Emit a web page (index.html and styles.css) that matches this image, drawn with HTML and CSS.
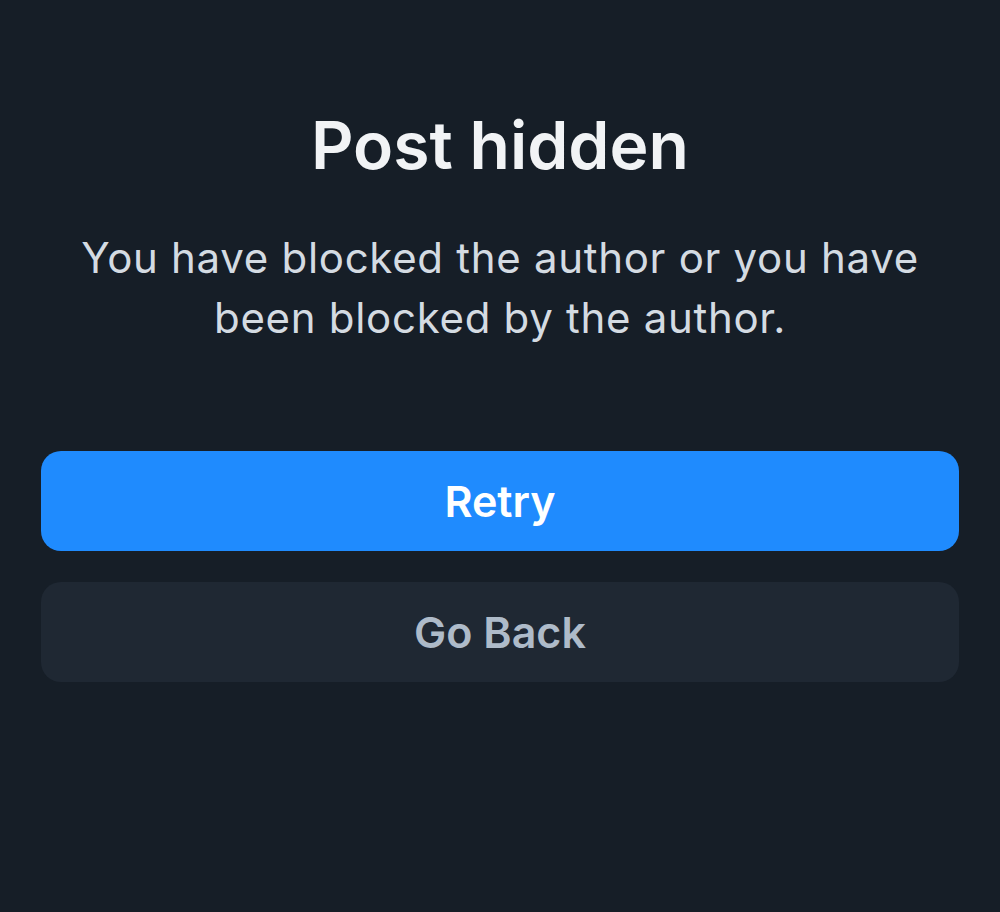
FILE: index.html
```html
<!DOCTYPE html>
<html>
<head>
<meta charset="utf-8">
<link rel="stylesheet" href="styles.css">
</head>
<body>
<main class="screen">
  <h1 class="title">Post hidden</h1>
  <p class="message">You have blocked the author or you have been blocked by the author.</p>
  <div class="actions">
    <button class="btn btn-primary">Retry</button>
    <button class="btn btn-secondary">Go Back</button>
  </div>
</main>
</body>
</html>
```
FILE: styles.css
```css
html, body {
  margin: 0;
  padding: 0;
  background: #161e27;
  height: 100%;
}
body {
  font-family: Inter, "Noto Sans", sans-serif;
}
.screen {
  display: flex;
  flex-direction: column;
  padding: 100px 41px 0;
}
.title {
  margin: 0;
  text-align: center;
  color: #f1f3f5;
  font-size: 66px;
  font-weight: 600;
  line-height: 90px;
  letter-spacing: 0;
}
.message {
  margin: 38px 30px 0;
  text-align: center;
  color: #d4dbe2;
  font-size: 42px;
  font-weight: 400;
  line-height: 60px;
  letter-spacing: 0.7px;
}
.actions {
  display: flex;
  flex-direction: column;
  gap: 31px;
  margin-top: 103px;
}
.btn {
  height: 100px;
  border: none;
  border-radius: 20px;
  font-family: Inter, "Noto Sans", sans-serif;
  font-size: 43px;
  font-weight: 600;
}
.btn-primary {
  background: #1f8bfe;
  color: #ffffff;
}
.btn-secondary {
  background: #1f2833;
  color: #aebbc9;
}
```
